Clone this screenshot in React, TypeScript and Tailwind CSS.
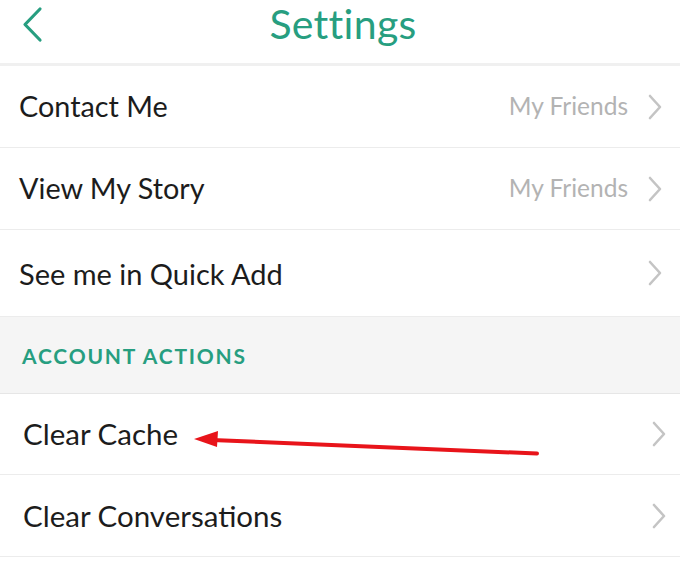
import React from "react";

const Chevron = ({ className = "" }: { className?: string }) => (
  <svg width="16" height="26" viewBox="0 0 16 26" className={className} fill="none">
    <path d="M3 2 L13 13 L3 24" stroke="#c4c4c4" strokeWidth="2.6" strokeLinecap="round" strokeLinejoin="round" />
  </svg>
);

const Row = ({
  label,
  value,
  h,
  pl,
  pr,
  size,
}: {
  label: string;
  value?: string;
  h: string;
  pl: string;
  pr: string;
  size: string;
}) => (
  <div className={`flex items-center justify-between border-b border-[#ececec] ${h} ${pl} ${pr}`}>
    <span className={`${size} text-[#1c1c1c] leading-none`}>{label}</span>
    <div className="flex items-center gap-[19px]">
      {value && <span className="text-[24.5px] text-[#b3b3b3] leading-none">{value}</span>}
      <Chevron />
    </div>
  </div>
);

export default function App() {
  return (
    <div
      className="w-[680px] h-[568px] bg-white overflow-hidden relative"
      style={{ fontFamily: "Lato, 'Noto Sans', sans-serif" }}
    >
      <div className="h-[66px] relative flex items-start justify-center pt-[1px] border-b-[3px] border-[#f0f0f0]">
        <svg width="24" height="38" viewBox="0 0 24 38" className="absolute left-[20px] top-[5px]" fill="none">
          <path d="M20 4 L5 19.5 L20 35" stroke="#279e80" strokeWidth="3.2" strokeLinecap="round" strokeLinejoin="round" />
        </svg>
        <span className="text-[41px] text-[#279e80] leading-[46px] ml-[6px] tracking-[0.3px]">Settings</span>
      </div>
      <Row label="Contact Me" value="My Friends" h="h-[82px]" pl="pl-[19px]" pr="pr-[17px]" size="text-[28.8px]" />
      <Row label="View My Story" value="My Friends" h="h-[82px]" pl="pl-[19px]" pr="pr-[17px]" size="text-[28.8px]" />
      <Row label="See me in Quick Add" h="h-[87px]" pl="pl-[19px]" pr="pr-[17px]" size="text-[29px]" />
      <div className="h-[77px] bg-[#f5f5f5] border-b border-[#e6e6e6] flex items-center pl-[22px]">
        <span className="text-[21px] font-bold tracking-[1.8px] text-[#279e80] leading-none">ACCOUNT ACTIONS</span>
      </div>
      <Row label="Clear Cache" h="h-[81px]" pl="pl-[23px]" pr="pr-[13px]" size="text-[29.5px]" />
      <Row label="Clear Conversations" h="h-[82px]" pl="pl-[23px]" pr="pr-[13px]" size="text-[29.5px]" />
      <svg
        className="absolute left-0 top-0 pointer-events-none"
        width="680"
        height="568"
        viewBox="0 0 680 568"
        fill="none"
      >
        <path d="M212 440 L537 453.5" stroke="#e8141a" strokeWidth="4" strokeLinecap="round" />
        <path d="M194 439 L218 431 L217 447 Z" fill="#e8141a" />
      </svg>
    </div>
  );
}
